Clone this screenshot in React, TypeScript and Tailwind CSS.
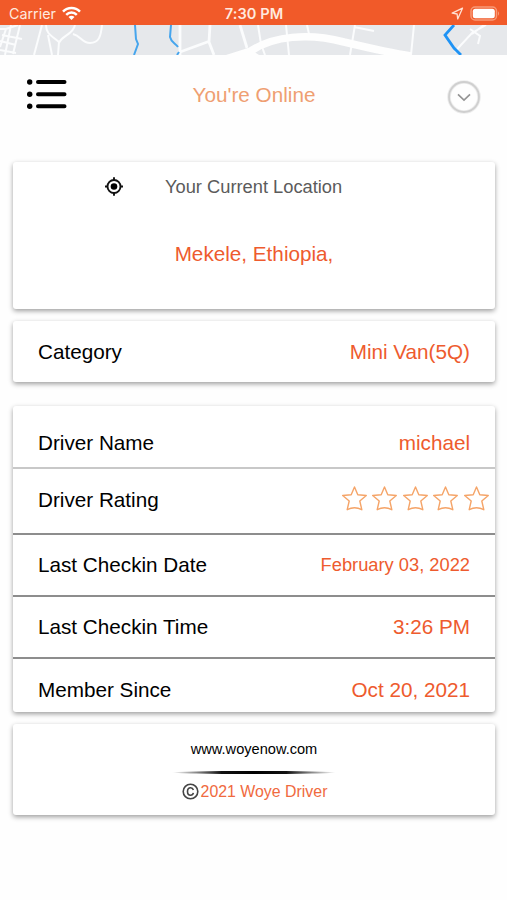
import type { ReactNode } from "react";

const CARD = "bg-white rounded-[3px] shadow-[0_2px_5px_rgba(0,0,0,0.38)]";

export default function App() {
    return (
        <div className="w-full h-[900px] overflow-hidden bg-[#fefefe] font-['Liberation_Sans','Arial',sans-serif] text-black">
            <StatusBar />
            <MapStrip />

            {/* Header */}
            <header className="h-[107px] pl-[26px] pr-[26px] flex justify-between items-start">
                <MenuIcon />
                <h1 className="mt-[27px] mr-[6px] text-[20.7px] leading-[26px] text-[#ef9f72]">You're Online</h1>
                <button className="mt-[25px] w-[34px] h-[34px] flex items-center justify-center">
                    <svg width="34" height="34" viewBox="0 0 34 34" fill="none">
                        <circle cx="17" cy="17" r="15" stroke="#ececec" strokeWidth="3.6" />
                        <circle cx="17" cy="17" r="15" stroke="#cfcfcf" strokeWidth="1.8" />
                        <path d="M11 14.300l6 5.800 6-5.800" stroke="#949494" strokeWidth="1.6" />
                    </svg>
                </button>
            </header>

            <main className="pl-[13px] pr-3">
                <section className={`${CARD} h-[147px] pt-[13px]`}>
                    <div className="flex items-center h-6 pl-[92px]">
                        <LocateIcon />
                        <span className="ml-[41px] pb-px text-[18.3px] text-[#5b5b5b] whitespace-nowrap">Your Current Location</span>
                    </div>
                    <p className="mt-[42px] text-center text-[20.7px] leading-[26px] text-[#ee5b2e]">Mekele, Ethiopia,</p>
                </section>

                <section className={`${CARD} mt-3 h-[61px] flex`}>
                    <Row label="Category">Mini Van(5Q)</Row>
                </section>

                <section className={`${CARD} mt-6 h-[306px] flex flex-col`}>
                    <div className="h-[63px] pt-[13px] flex border-b-2 border-[#c8c8c8]">
                        <Row label="Driver Name">michael</Row>
                    </div>
                    <div className="h-[66px] pb-[3px] flex border-b-2 border-[#8d8d8d]">
                        <Row label="Driver Rating">
                            <Stars />
                        </Row>
                    </div>
                    <div className="h-[62px] flex border-b-2 border-[#8d8d8d]">
                        <Row label="Last Checkin Date">
                            <span className="relative -top-px text-[18.3px]">February 03, 2022</span>
                        </Row>
                    </div>
                    <div className="h-[62px] flex border-b-2 border-[#8d8d8d]">
                        <Row label="Last Checkin Time">3:26 PM</Row>
                    </div>
                    <div className="h-[53px] pt-[9px] flex">
                        <Row label="Member Since">Oct 20, 2021</Row>
                    </div>
                </section>

                <footer className={`${CARD} mt-3 h-[91px] pt-[15px] flex flex-col items-center`}>
                    <p className="text-[14.6px] leading-[20px]">www.woyenow.com</p>
                    <div className="mt-[12px] w-[164px] h-[3px] rounded-[50%] bg-[linear-gradient(to_right,transparent,#111_30%,#000_50%,#111_70%,transparent)]" />
                    <div className="mt-[8px] pl-px flex items-center text-[15.9px] leading-[20px] text-[#f06a3e]">
                        <CopyrightIcon />
                        <span className="ml-[2px]">2021 Woye Driver</span>
                    </div>
                </footer>
            </main>
        </div>
    );
}

function Row({ label, children }: { label: string; children: ReactNode }) {
    return (
        <div className="flex-1 flex items-center justify-between pl-[25px] pr-[25px] text-[20.7px] leading-[26px]">
            <span className="whitespace-nowrap">{label}</span>
            <span className="whitespace-nowrap text-[#ee5b2e]">{children}</span>
        </div>
    );
}

function StatusBar() {
    return (
        <div className="h-[25px] bg-[#f15a29] text-[#ffe9df] font-['Inter',sans-serif] grid grid-cols-3 items-center">
            <div className="pl-[9px] pt-[2px] flex items-center gap-[6px]">
                <span className="text-[14.3px] leading-5">Carrier</span>
                <svg width="19" height="15" viewBox="0 0 19 15" fill="none" stroke="#ffffff" strokeWidth="2.5">
                    <path d="M1 5.6C5.8.7 13.200.7 18 5.6" />
                    <path d="M4.200 8.800c3-3 7.600-3 10.600 0" />
                    <path d="M9.500 14l-3-3c1.700-1.600 4.300-1.600 6 0z" fill="#ffffff" stroke="none" />
                </svg>
            </div>
            <div className="pt-[2px] pl-px text-center text-[14.6px] leading-5 font-semibold tracking-[0.1px]">7:30 PM</div>
            <div className="pr-[7px] pt-[1px] flex justify-end items-center gap-[6px]">
                <svg width="13" height="13" viewBox="0 0 13 13" fill="none" stroke="#ffe0d2" strokeWidth="1.3" strokeLinejoin="round">
                    <path d="M11.500 1.200L1.200 6.200l4.900.8.600 4.900z" />
                </svg>
                <svg width="30" height="15" viewBox="0 0 30 15" fill="none">
                    <rect x="1" y="1" width="25.500" height="13" rx="4" stroke="#f79a78" strokeWidth="1.500" />
                    <rect x="2.800" y="2.800" width="22" height="9.400" rx="2.500" fill="#ffffff" />
                    <path d="M28 5.300c1.400.8 1.400 3.600 0 4.400z" fill="#f79a78" />
                </svg>
            </div>
        </div>
    );
}

function MapStrip() {
    return (
        <svg className="block w-full h-[30px]" viewBox="0 0 507 30" preserveAspectRatio="none" fill="none">
            <rect width="507" height="30" fill="#e6e8eb" />
            <g stroke="#fbfcfd" strokeWidth="2">
                <path d="M0 4h6l12-4M6 4L0 22M11 0L5 30M20 0l-7 29M0 16l16 4M2 10l20 4M0 25l16 3" />
                <path d="M42 0l-4 15-4 15" />
                <path d="M46 0c0 9 6 11 13 17l-1 13M48 10l4 20M75 0c-2 10-13 10-16 18M73 9c8 2 9 9 17 9 9 0 11-7 12-18" />
                <path d="M180 0v30M210 0l-1 17 5 13M180 27l30-11M240 0l7 23" strokeWidth="2.800" />
                <path d="M258 0l3 19 4 11M286 0l3 30M307 0l2 9M355 0l-5 30M354 2l20 4M414 0l-3 30" />
                <path d="M486 0l-14 8-12 13-5 6M470 4l10 7-2 8M472 9l12-9" />
            </g>
            <path d="M248 28c24-18 62-20 96-11 25 6 46 11 67 14" stroke="#fefefe" strokeWidth="7.500" />
            <path d="M226 30l22-7 11 7z" fill="#fefefe" />
            <g stroke="#46a5ed" strokeWidth="2">
                <path d="M135 0l1 14 2 5-4 11M171 0l-1 12c1 5 5 6 8 10M179 27l-2 3" />
                <path d="M454 0l-9 10 9 13 7 7" stroke="#1f93f5" strokeWidth="2.800" />
            </g>
        </svg>
    );
}

function MenuIcon() {
    return (
        <svg className="mt-[24px]" width="41" height="31" viewBox="0 0 41 31" stroke="#000000" strokeWidth="4" strokeLinecap="round">
            <path d="M12 3h26.500M12 15.200h26.500M12 27.300h26.500" />
            <g fill="#000000" stroke="none">
                <circle cx="3.700" cy="3" r="2.700" />
                <circle cx="3.700" cy="15.200" r="2.700" />
                <circle cx="3.700" cy="27.300" r="2.700" />
            </g>
        </svg>
    );
}

function LocateIcon() {
    return (
        <svg className="-mt-[2px]" width="19" height="19" viewBox="0 0 19 19" fill="none" stroke="#111111" strokeWidth="1.900">
            <circle cx="9" cy="9.500" r="6.500" />
            <circle cx="9" cy="9.500" r="3.300" fill="#000000" stroke="none" />
            <path d="M9 .3v3M9 15.700v3M0 9.500h3M15 9.500h3" />
        </svg>
    );
}

function Stars() {
    return (
        <span className="flex gap-[5.600px] -mr-[19px]">
            {[1, 2, 3, 4, 5].map((n) => (
                <svg key={n} className="-mt-[3px]" width="25" height="25" viewBox="0 0 25 25" fill="none" stroke="#f5a468" strokeWidth="1.400" strokeLinejoin="round">
                    <path d="M12.500 1l3.300 7.800 8.500.7-6.500 5.500 2 8.700c-4.800-2.600-9.800-2.600-14.600 0l2-8.700L.7 9.500l8.500-.7z" />
                </svg>
            ))}
        </span>
    );
}

function CopyrightIcon() {
    return (
        <svg className="-mt-px" width="17" height="17" viewBox="0 0 17 17" fill="none" stroke="#444444" strokeWidth="1.600">
            <circle cx="8.500" cy="8.500" r="7.300" />
            <path d="M11.400 6.900c-.4-1.300-1.400-2.100-2.800-2.100-1.900 0-3.100 1.500-3.100 3.700s1.200 3.700 3.100 3.700c1.500 0 2.500-.9 2.800-2.300" />
        </svg>
    );
}
